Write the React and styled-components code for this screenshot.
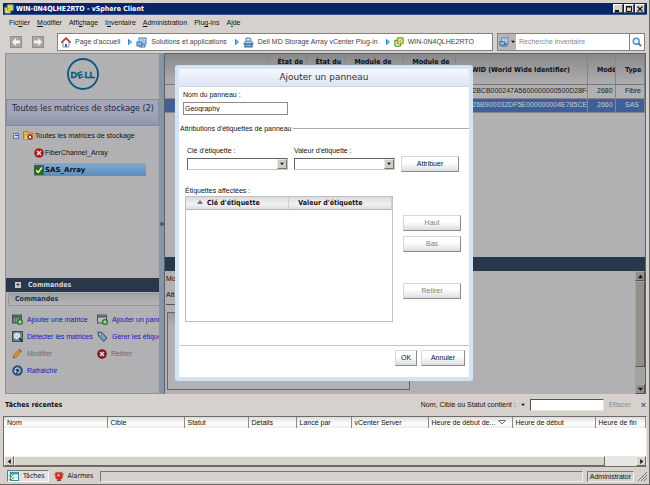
import React from 'react';
import styled, { createGlobalStyle, css } from 'styled-components';

const GlobalStyle = createGlobalStyle`
  * {
    box-sizing: border-box;
  }
  body {
    margin: 0;
    background: #d6d1cd;
    color: #111;
    font: 7px/10px 'Liberation Sans', Arial, sans-serif;
    white-space: nowrap;
  }
  button, input, select {
    margin: 0;
    padding: 0;
    border: 0;
    border-radius: 0;
    background: none;
    color: inherit;
    font: inherit;
  }
  a {
    color: inherit;
    text-decoration: none;
  }
  svg {
    display: block;
    flex: none;
  }
`;

const wide = css`
  font-family: 'DejaVu Sans', Verdana, sans-serif;
`;

const condensed = css`
  font-family: 'DejaVu Sans Condensed', 'DejaVu Sans', Tahoma, sans-serif;
`;

const dots = css`
  background-color: #b2b2b5;
  background-image: radial-gradient(#afafb2 1px, transparent 1px);
  background-size: 4px 4px;
`;

/* icons */

const ServerIcon = ({ size = 10 }) => (
  <svg width={size} height={size} viewBox="0 0 12 12">
    <rect x="1" y="4" width="7" height="7" rx="1" fill="#f3f7e0" stroke="#5f9a2c" strokeWidth="1.5" />
    <rect x="4" y="1" width="7" height="7" rx="1" fill="#d9e8a8" stroke="#6fa533" strokeWidth="1.5" />
    <rect x="5" y="5" width="3" height="3" fill="#fff" stroke="#e0952b" />
    <path d="M3 8l2-2M7 5l2-2" stroke="#e0952b" />
  </svg>
);

const HomeIcon = () => (
  <svg width="10" height="11" viewBox="0 0 10 11">
    <path d="M2 5v5h6V5L5 2z" fill="#f2f4f8" stroke="#8a9ab2" />
    <path d="M0 6l5-5 5 5" fill="none" stroke="#c8402f" strokeWidth="1.6" />
    <path d="M4 7h2v3H4z" fill="#3d6ea8" />
  </svg>
);

const SolutionsIcon = ({ size = 11 }) => (
  <svg width={size} height={size} viewBox="0 0 11 11">
    <rect x="3" y="1" width="7" height="6" fill="#cfe3f6" stroke="#4778b4" />
    <path d="M5 3h3v3" fill="none" stroke="#7fa9d8" />
    <rect x="1" y="5" width="5" height="4" fill="#8ebbe8" stroke="#3c6ca9" />
    <path d="M6 8h3v2H3" fill="none" stroke="#3c6ca9" />
  </svg>
);

const PluginIcon = () => (
  <svg width="11" height="11" viewBox="0 0 11 11">
    <path d="M3 5V1h4l1 1v3" fill="#dbe9f5" stroke="#507eae" />
    <ellipse cx="5.5" cy="6.5" rx="5" ry="3" fill="#5d8cc0" />
    <path d="M2.5 7h6l1 3h-8z" fill="#83abd6" stroke="#3c6799" />
    <path d="M2.5 5.5h6" stroke="#cfe2f5" />
  </svg>
);

const CrumbArrow = () => (
  <svg width="4" height="6" viewBox="0 0 4 6">
    <path d="M.5.5L3.5 3 .5 5.5z" fill="#9bd1f7" stroke="#2383c9" />
  </svg>
);

const SearchIcon = () => (
  <svg width="10" height="10" viewBox="0 0 10 10">
    <circle cx="4.2" cy="4.2" r="3" fill="#e3f2fc" stroke="#4f90c8" strokeWidth="1.4" />
    <path d="M6.3 6.3L9.2 9.2" stroke="#54718f" strokeWidth="1.8" />
  </svg>
);

const NavArrow = ({ back }) => (
  <svg width="8" height="8" viewBox="0 0 8 8">
    <path d={back ? 'M0 4l4-4v2.5h4v3H4V8z' : 'M8 4L4 0v2.5H0v3h4V8z'} fill="#f4f4f4" />
  </svg>
);

const Triangle = ({ dir = 'down', fill = '#111', size = 5 }) => {
  const paths = {
    down: 'M0 1h6L3 4.5z',
    up: 'M0 5h6L3 1z',
    left: 'M4.5 0v6L1 3z',
    right: 'M1.5 0v6L5 3z',
  };
  return (
    <svg width={size} height={size} viewBox="0 0 6 6">
      <path d={paths[dir]} fill={fill} />
    </svg>
  );
};

const DellLogo = () => (
  <svg width="32" height="32" viewBox="0 0 32 32" role="img" aria-label="Dell">
    <circle cx="16" cy="16" r="15" fill="none" stroke="#0b567f" strokeWidth="1.8" />
    <text
      x="3.5 11.5 17.5 22.5"
      y="19.5 21 19.5 19.5"
      rotate="0 -20 0 0"
      fill="#0b567f"
      stroke="#0b567f"
      strokeWidth=".3"
      fontFamily="Liberation Sans, Arial, sans-serif"
      fontWeight="bold"
      fontSize="9"
    >
      DELL
    </text>
  </svg>
);

const FolderIcon = () => (
  <svg width="11" height="11" viewBox="0 0 11 11">
    <path d="M.5 9.5v-8h4l1 1.5h4v6.5z" fill="#dfba4c" stroke="#a5812b" />
    <path d="M.5 9.5l2-5h8l-1 5z" fill="#ecd27b" stroke="#a5812b" strokeWidth=".6" />
    <circle cx="7" cy="7" r="2.8" fill="#b52d2d" />
    <path d="M5.9 5.9l2.2 2.2m0-2.2L5.9 8.1" stroke="#fff" />
  </svg>
);

const ErrorIcon = ({ fill = '#a71d22' }) => (
  <svg width="10" height="10" viewBox="0 0 10 10">
    <circle cx="5" cy="5" r="4.8" fill={fill} />
    <path d="M3 3l4 4m0-4L3 7" stroke="#e8e0e0" strokeWidth="1.5" />
  </svg>
);

const CheckIcon = () => (
  <svg width="10" height="10" viewBox="0 0 10 10">
    <rect width="10" height="10" rx="1" fill="#2c6b25" />
    <path d="M2.2 5.2l2 2.2 3.8-5" fill="none" stroke="#f0f5ee" strokeWidth="1.4" />
  </svg>
);

const ArrayIcon = ({ panel }) => (
  <svg width="11" height="11" viewBox="0 0 11 11">
    <rect x=".5" y="1" width="9" height="8" fill={panel ? '#b9bcbd' : '#56765f'} stroke="#4b5358" />
    <path d="M1 2.5h8" stroke="#52606a" strokeWidth="2" />
    {!panel && <path d="M2 5h6M2 7h6" stroke="#b7c7b8" strokeDasharray="1 1" />}
    <circle cx="8" cy="8" r="3" fill="#23772b" />
    <path d="M8 6v4M6 8h4" stroke="#c8e6c4" />
  </svg>
);

const DetectIcon = () => (
  <svg width="11" height="11" viewBox="0 0 11 11">
    <rect x=".5" y=".5" width="10" height="10" fill="#6c8590" stroke="#34505f" />
    <circle cx="5" cy="5" r="2.8" fill="#c3dae4" stroke="#e6eef2" />
    <path d="M7 7l3 3" stroke="#15232d" strokeWidth="1.6" />
  </svg>
);

const TagIcon = () => (
  <svg width="11" height="11" viewBox="0 0 11 11">
    <path d="M1 1l4 .6 5 5.4-3.2 3.5L1.5 5z" fill="#6b8fae" stroke="#34536e" />
    <circle cx="3" cy="3" r=".8" fill="#e6edf2" />
    <path d="M5 4l3 3M4 5.4l3 3" stroke="#c5d5e2" strokeWidth=".6" />
  </svg>
);

const PencilIcon = () => (
  <svg width="11" height="11" viewBox="0 0 11 11">
    <path d="M1 10l1-3.2L7.3 1.2 9.6 3.4 4.2 9z" fill="#d8912f" stroke="#8d6434" strokeWidth=".7" />
    <path d="M6.5 2l2.3 2.3 1-1.1L7.5 1z" fill="#b4574c" />
    <path d="M1 10l.5-1.5 1 1z" fill="#333" />
  </svg>
);

const RefreshIcon = () => (
  <svg width="11" height="11" viewBox="0 0 11 11">
    <circle cx="5.5" cy="5.5" r="5.2" fill="#294c78" />
    <path d="M3.2 6.8a2.6 2.6 0 1 1 2.3 1.3" fill="none" stroke="#c9d6e4" strokeWidth="1.2" />
    <path d="M2 6h3L3.5 8.4z" fill="#c9d6e4" />
  </svg>
);

const TasksIcon = () => (
  <svg width="10" height="9" viewBox="0 0 10 9">
    <rect x="1.5" y=".5" width="8" height="8" fill="#fff" stroke="#3a86a8" />
    <path d="M2 1.5h7" stroke="#3fa0cf" strokeWidth="2" />
    <path d="M4.5 3v5M7 3v5M2 5.5h7" stroke="#a9cbd8" strokeWidth=".6" />
    <path d="M.5 3.5l1.5 1.5L4.5 2M.5 7l1.5 1.5L4.5 5.5" fill="none" stroke="#2c9a3b" />
  </svg>
);

const AlarmIcon = () => (
  <svg width="10" height="10" viewBox="0 0 10 10">
    <path d="M.5 4l2.5-3M9.5 4L7 1" stroke="#9a6a24" strokeWidth="1.2" />
    <circle cx="5" cy="5" r="3.8" fill="#d3281e" />
    <circle cx="4.4" cy="4.2" r="1.3" fill="#f5a093" />
    <path d="M3 9.2h4" stroke="#6d3323" strokeWidth="1.4" />
  </svg>
);

const Grip = () => (
  <svg width="9" height="9" viewBox="0 0 9 9">
    <path d="M0 9l9-9M3 9l6-6M6 9l3-3" stroke="#77736c" />
  </svg>
);

/* window frame */

const Window = styled.div`
  display: flex;
  flex-direction: column;
  min-height: 100vh;
  padding: 3px 2px 0 3px;
  border-bottom: 1px solid #6a6763;
  border-right: 1px solid #6a6763;
  background: #d6d1cd;
`;

const TitleBar = styled.header`
  display: flex;
  align-items: center;
  gap: 2px;
  height: 12px;
  padding: 0 2px 0 1px;
  background: #0a246a;
  color: #fff;
  border-bottom: 1px solid #3a5590;
`;

const WindowTitle = styled.h1`
  ${condensed}
  flex: 1;
  margin: 0;
  font-size: 7px;
  line-height: 10px;
`;

const CaptionButtons = styled.div`
  display: flex;
  gap: 1px;
`;

const CaptionButton = styled.button`
  display: grid;
  place-items: center;
  width: 10px;
  height: 9px;
  background: #d6d1cd;
  border: 1px solid;
  border-color: #fff #55524e #55524e #fff;
  color: #111;
`;

const MenuBar = styled.nav`
  display: flex;
  gap: 7px;
  padding: 3px 6px 4px;
  line-height: 10px;
`;

const Toolbar = styled.div`
  display: flex;
  align-items: center;
  gap: 4px;
  height: 21px;
  padding: 1px 2px 2px 7px;
`;

const NavButtons = styled.div`
  display: flex;
  gap: 10px;
  padding-right: 9px;
`;

const NavButton = styled.button`
  display: grid;
  place-items: center;
  width: 12px;
  height: 12px;
  background: #aaa8a5;
  border: 1px solid #918f8c;
`;

const Breadcrumb = styled.nav`
  display: flex;
  flex: 1;
  align-items: center;
  height: 18px;
  padding: 0 3px;
  background: #fff;
  border: 1px solid #85827e;
  color: #444;
`;

const Crumb = styled.a`
  display: flex;
  align-items: center;
  gap: 4px;
`;

const CrumbSeparator = styled.span`
  padding: 0 4px 0 8px;
`;

const SearchBox = styled.form`
  display: flex;
  width: 148px;
  height: 18px;
  background: #fff;
  border: 1px solid #85827e;
`;

const SearchScope = styled.button`
  display: flex;
  align-items: center;
  justify-content: center;
  gap: 2px;
  width: 18px;
  background: #b9b6b3;
`;

const SearchInput = styled.input`
  flex: 1;
  min-width: 0;
  padding-left: 3px;
  color: #777;
  &::placeholder {
    color: #888;
    opacity: 1;
  }
`;

const SearchButton = styled.button`
  display: grid;
  place-items: center;
  width: 15px;
  border-left: 1px solid #85827e;
`;

/* main area */

const Main = styled.main`
  position: relative;
  display: flex;
  flex: 1;
  margin: 0 1px 0 2px;
`;

const Sidebar = styled.aside`
  display: flex;
  flex-direction: column;
  width: 154px;
  overflow: hidden;
  border: 1px solid #8d9096;
  border-right: 0;
  ${dots}
`;

const LogoArea = styled.div`
  display: grid;
  place-items: center;
  height: 45px;
  padding-bottom: 5px;
`;

const SidebarTitle = styled.h2`
  ${wide}
  margin: 0;
  height: 27px;
  padding: 2px 5px;
  border: 1px solid #868a9c;
  background: linear-gradient(#a5a8b8, #9ea3b6 60%, #8e95ac);
  color: #252b38;
  font-size: 8px;
  font-weight: normal;
  line-height: 13px;
`;

const Tree = styled.ul`
  flex: 1;
  margin: 0;
  padding: 1px 7px;
  list-style: none;
`;

const TreeRow = styled.li`
  display: flex;
  align-items: center;
  gap: 1px;
  height: 17px;
  padding-left: ${({ $level }) => $level * 21}px;
`;

const TreeToggle = styled.button`
  display: grid;
  place-items: center;
  width: 6px;
  height: 6px;
  margin-right: 3px;
  border: 1px solid #5c78b0;
  background: #cfd5e2;
  &::after {
    content: '';
    width: 3px;
    height: 1px;
    background: #2d4b8c;
  }
`;

const TreeItem = styled.a`
  display: flex;
  align-items: center;
  gap: 1px;
  flex: 1;
  height: 13px;
  margin-right: 6px;
  ${({ $selected }) =>
    $selected &&
    css`
      ${wide}
      background: linear-gradient(#7fa9d0, #5b8dbd);
      font-weight: bold;
    `}
`;

const SectionBar = styled.h3`
  ${condensed}
  display: flex;
  align-items: center;
  gap: 7px;
  margin: 0;
  height: 14px;
  padding: 0 9px;
  background: #29374b;
  color: #d3d6da;
  font-size: 7px;
`;

const CollapseBox = styled.span`
  display: grid;
  place-items: center;
  width: 6px;
  height: 6px;
  background: #c3c6ca;
`;

const CommandTitle = styled.h4`
  ${condensed}
  margin: 1px 0 0 2px;
  padding: 0 6px 1px;
  border: 1px solid #97989b;
  border-right: 0;
  background: linear-gradient(#a2a3a6, #b5b5b8);
  color: #17364f;
  font-size: 7px;
`;

const CommandGrid = styled.div`
  display: grid;
  grid-template-columns: 85px 1fr;
  grid-auto-rows: 17px;
  padding: 5px 0 14px 6px;
`;

const Command = styled.button`
  display: flex;
  align-items: center;
  gap: 4px;
  min-width: 0;
  color: #1515b8;
  &:disabled {
    color: #6b6b6e;
  }
`;

const Splitter = styled.div`
  display: grid;
  place-items: center;
  width: 5px;
  background: #8495a5;
  &::after {
    content: '';
    width: 4px;
    height: 4px;
    border-radius: 50%;
    background: #4e5964;
  }
`;

const Content = styled.section`
  display: flex;
  flex-direction: column;
  flex: 1;
  min-width: 0;
  border: 1px solid #5d6066;
  border-width: 1px 1px 0;
  ${dots}
`;

const ArrayTable = styled.table`
  width: 100%;
  border-collapse: collapse;
  table-layout: fixed;
`;

const ArrayHead = styled.th`
  ${condensed}
  height: 30px;
  padding: 3px 0 0 9px;
  overflow: hidden;
  border-right: 1px solid #85868a;
  border-bottom: 1px solid #77787c;
  background: linear-gradient(#89898c, #aeaeb1);
  font-size: 7px;
  text-align: left;
  vertical-align: ${({ $middle }) => ($middle ? 'middle' : 'top')};
`;

const ArrayRow = styled.tr`
  background: ${({ $selected }) => ($selected ? '#405f98' : 'transparent')};
  color: ${({ $selected }) => ($selected ? '#c3cbd9' : '#222')};
`;

const ArrayCell = styled.td`
  height: 14px;
  padding: 0 0 0 9px;
  overflow: hidden;
  border-right: 1px solid #85868a;
  border-bottom: 1px solid #85868a;
`;

const ContentGap = styled.div`
  flex: 1;
`;

const Detail = styled.div`
  display: flex;
  height: 123px;
`;

const DetailBody = styled.div`
  flex: 1;
  padding: 3px 1px;
`;

const DetailLine = styled.p`
  margin: 0;
  width: 244px;
  padding-bottom: 6px;
  &:nth-child(2) {
    border-bottom: 1px solid #55565a;
    padding-bottom: 4px;
  }
`;

const DetailBox = styled.div`
  width: 243px;
  height: 78px;
  margin: 7px 0 0 1px;
  border: 1px solid #67686c;
  background: linear-gradient(#9b9b9e, #b2b2b5 14px);
`;

const ScrollTrack = styled.div`
  display: flex;
  flex-direction: ${({ $horizontal }) => ($horizontal ? 'row' : 'column')};
  width: ${({ $horizontal }) => ($horizontal ? 'auto' : '10px')};
  height: ${({ $horizontal }) => ($horizontal ? '10px' : 'auto')};
  background: ${({ $horizontal }) => ($horizontal ? '#e8e6e2' : '#a3a39f')};
`;

const ScrollButton = styled.button`
  display: grid;
  place-items: center;
  width: 10px;
  height: 10px;
  background: ${({ $dim }) => ($dim ? '#91908c' : '#d6d2cc')};
  border: 1px solid;
  border-color: ${({ $dim }) => ($dim ? '#aaa9a5 #555 #555 #aaa9a5' : '#f5f4f2 #6b6863 #6b6863 #f5f4f2')};
`;

const ScrollThumb = styled.div`
  flex: ${({ $grow }) => $grow};
  background: ${({ $dim }) => ($dim ? '#91908b' : '#d6d2cc')};
  border: 1px solid;
  border-color: ${({ $dim }) => ($dim ? '#a5a4a0 #555 #555 #a5a4a0' : '#f5f4f2 #6b6863 #6b6863 #f5f4f2')};
`;

const ScrollRest = styled.div`
  flex: ${({ $grow }) => $grow};
`;

/* dialog */

const Overlay = styled.div`
  position: absolute;
  inset: 0;
  display: grid;
  place-items: center;
  padding: 0 3px 2px 0;
`;

const Dialog = styled.div`
  width: 298px;
  border: 4px solid #d5e4f4;
  border-radius: 3px;
  background: #fff;
`;

const DialogTitle = styled.h2`
  ${wide}
  margin: 0;
  height: 18px;
  background: linear-gradient(#f6f8fd, #dfe4f3);
  border-bottom: 1px solid #cdd3e2;
  color: #333;
  font-size: 9px;
  font-weight: normal;
  line-height: 17px;
  text-align: center;
`;

const Form = styled.form`
  padding: 3px 0 0 1px;
`;

const NameField = styled.div`
  display: flex;
  flex-direction: column;
  gap: 2px;
  width: 108px;
  padding-left: 3px;
`;

const NameInput = styled.input`
  height: 13px;
  padding: 0 1px;
  border: 1px solid #8a8c8e;
  background: #fff;
`;

const Legend = styled.div`
  display: flex;
  align-items: center;
  gap: 2px;
  margin: 9px 0 12px;
  &::after {
    content: '';
    flex: 1;
    height: 1px;
    background: #aaacae;
  }
`;

const AssignRow = styled.div`
  display: flex;
  align-items: flex-end;
  gap: 6px;
  padding-left: 7px;
`;

const SelectField = styled.div`
  display: grid;
  gap: 2px;
  width: 101px;
  padding-bottom: 2px;
`;

const SelectShell = styled.div`
  display: grid;
  height: 12px;
  border: 1px solid;
  border-color: #66635f #c9c7c3 #c9c7c3 #66635f;
  background: #fff;
  > * {
    grid-area: 1 / 1;
  }
`;

const Select = styled.select`
  appearance: none;
  width: 100%;
  height: 10px;
`;

const SelectArrow = styled.span`
  display: grid;
  place-items: center;
  justify-self: end;
  width: 10px;
  height: 10px;
  border: 1px solid;
  border-color: #ece9e4 #77746f #77746f #ece9e4;
  background: #d0cdc7;
  pointer-events: none;
`;

const Button = styled.button`
  width: ${({ $width }) => $width || 58}px;
  height: 16px;
  border: 1px solid;
  border-color: #d8d8da #8b8b8e #8b8b8e #d8d8da;
  background: linear-gradient(#fff 40%, #dddde2);
  &:disabled {
    color: #808083;
  }
`;

const TagsLabel = styled.div`
  padding-left: 5px;
  margin-top: 14px;
`;

const TagsRow = styled.div`
  display: flex;
  gap: 10px;
  padding-left: 5px;
`;

const TagsBox = styled.div`
  width: 208px;
  height: 126px;
  border: 1px solid #bfc0c2;
`;

const TagsTable = styled.table`
  width: 100%;
  border-collapse: collapse;
  table-layout: fixed;
`;

const TagsHead = styled.th`
  ${condensed}
  height: 13px;
  padding: 0 0 0 ${({ $sorted }) => ($sorted ? 11 : 9)}px;
  background: linear-gradient(#dcdcde, #f1f1f3 60%, #dededf);
  border-right: 1px solid #cfcfd1;
  border-bottom: 1px solid #b8b9bb;
  font-size: 7px;
  line-height: 10px;
  text-align: left;
  svg {
    display: inline-block;
    margin-right: 4px;
  }
`;

const TagActions = styled.div`
  display: flex;
  flex-direction: column;
  gap: 5px;
  padding-top: 19px;
  button:last-child {
    margin-top: 26px;
  }
`;

const DialogFooter = styled.footer`
  display: flex;
  justify-content: flex-end;
  gap: 4px;
  margin-top: 23px;
  padding: 4px 4px 11px 0;
  border-top: 1px solid #c3c4c6;
`;

/* recent tasks */

const TasksBar = styled.div`
  display: flex;
  align-items: center;
  gap: 5px;
  height: 22px;
  padding: 0 1px 0 2px;
`;

const TasksTitle = styled.h3`
  ${condensed}
  flex: 1;
  margin: 0;
  font-size: 7px;
`;

const FilterInput = styled.input`
  width: 74px;
  height: 12px;
  border: 1px solid;
  border-color: #55524e #e6e3df #e6e3df #55524e;
  background: #fff;
`;

const ClearButton = styled.button`
  color: #8e8b87;
  margin-right: 5px;
`;

const CloseButton = styled.button`
  color: #4a5f9c;
  font-size: 9px;
  font-weight: bold;
`;

const TasksBox = styled.div`
  display: flex;
  flex-direction: column;
  height: 51px;
  border: 1px solid;
  border-color: #6f6c68 #e6e3df #6f6c68 #6f6c68;
  background: #fff;
`;

const TasksTable = styled.table`
  width: 100%;
  border-collapse: collapse;
  table-layout: fixed;
`;

const TasksHead = styled.th`
  height: 11px;
  padding: 0 3px;
  overflow: hidden;
  background: linear-gradient(#dedcda, #fff 60%, #ecebea);
  border-right: 1px solid #8d8a86;
  font-weight: normal;
  text-align: left;
  svg {
    display: inline-block;
    margin-left: 3px;
  }
`;

const StatusBar = styled.footer`
  display: flex;
  align-items: center;
  gap: 4px;
  height: 17px;
  padding: 1px 0 0 4px;
`;

const StatusTab = styled.button`
  ${condensed}
  display: flex;
  align-items: center;
  gap: 4px;
  height: 12px;
  padding: 0 3px 0 1px;
  ${({ $active }) =>
    $active &&
    css`
      border: 1px solid;
      border-color: #7b7874 #fff #fff #7b7874;
      background: #e4e1de;
    `}
`;

const StatusField = styled.div`
  flex: ${({ $grow }) => ($grow ? 1 : 'none')};
  height: 11px;
  padding: 0 2px;
  border: 1px solid;
  border-color: #7b7874 #f1efec #f1efec #7b7874;
  line-height: 9px;
`;

const menus = [
  ['Fic', 'h', 'ier'],
  ['', 'M', 'odifier'],
  ['Affi', 'c', 'hage'],
  ['I', 'n', 'ventaire'],
  ['', 'A', 'dministration'],
  ['Plu', 'g', '-ins'],
  ['A', 'i', 'de'],
];

const crumbs = [
  { label: "Page d'accueil", Icon: HomeIcon },
  { label: 'Solutions et applications', Icon: SolutionsIcon },
  { label: 'Dell MD Storage Array vCenter Plug-in', Icon: PluginIcon },
  { label: 'WIN-0N4QLHE2RTO', Icon: ServerIcon },
];

const commands = [
  { label: 'Ajouter une matrice', icon: <ArrayIcon /> },
  { label: 'Ajouter un panneau', icon: <ArrayIcon panel /> },
  { label: 'Détecter les matrices', icon: <DetectIcon /> },
  { label: 'Gérer les étiquettes', icon: <TagIcon /> },
  { label: 'Modifier', icon: <PencilIcon />, disabled: true },
  { label: 'Retirer', icon: <ErrorIcon fill="#7d1a20" />, disabled: true },
  { label: 'Rafraîchir', icon: <RefreshIcon /> },
];

const arrayColumns = [
  { label: '', width: 103 },
  { label: 'État de', width: 38 },
  { label: 'État du', width: 39 },
  { label: 'Module de', width: 58 },
  { label: 'Module de', width: 52 },
  { label: 'WWID (World Wide Identifier)', middle: true },
  { label: 'Modèle', width: 28, middle: true },
  { label: 'Type', width: 29, middle: true },
];

const arrays = [
  { id: 'fc', wwid: '602BCB000247A5600000000500D28F4', model: '2680', type: 'Fibre' },
  { id: 'sas', wwid: '6026B900032DF5E000000004E785CED', model: '2660', type: 'SAS', selected: true },
];

const taskColumns = [
  { label: 'Nom', width: 103 },
  { label: 'Cible', width: 77 },
  { label: 'Statut', width: 64 },
  { label: 'Détails', width: 48 },
  { label: 'Lancé par', width: 55 },
  { label: 'vCenter Server', width: 77 },
  { label: 'Heure de début de...', width: 84, sorted: true },
  { label: 'Heure de début', width: 83 },
  { label: 'Heure de fin' },
];

function TopBars() {
  return (
    <>
      <TitleBar>
        <ServerIcon />
        <WindowTitle>WIN-0N4QLHE2RTO - vSphere Client</WindowTitle>
        <CaptionButtons>
          <CaptionButton aria-label="Réduire">
            <svg width="6" height="6"><path d="M0 5h4" stroke="#111" strokeWidth="2" /></svg>
          </CaptionButton>
          <CaptionButton aria-label="Agrandir">
            <svg width="6" height="6"><path d="M.5.5h5v5h-5zM0 1h6" fill="none" stroke="#111" /></svg>
          </CaptionButton>
          <CaptionButton aria-label="Fermer">
            <svg width="6" height="6"><path d="M.5.5l5 5m0-5l-5 5" stroke="#111" strokeWidth="1.2" /></svg>
          </CaptionButton>
        </CaptionButtons>
      </TitleBar>
      <MenuBar>
        {menus.map(([before, key, after]) => (
          <button key={before + key}>
            {before}
            <u>{key}</u>
            {after}
          </button>
        ))}
      </MenuBar>
      <Toolbar>
        <NavButtons>
          <NavButton aria-label="Précédent"><NavArrow back /></NavButton>
          <NavButton aria-label="Suivant"><NavArrow /></NavButton>
        </NavButtons>
        <Breadcrumb>
          {crumbs.map(({ label, Icon }, i) => (
            <React.Fragment key={label}>
              {i > 0 && <CrumbSeparator><CrumbArrow /></CrumbSeparator>}
              <Crumb href="#">
                <Icon />
                {label}
              </Crumb>
            </React.Fragment>
          ))}
        </Breadcrumb>
        <SearchBox>
          <SearchScope type="button" aria-label="Étendue">
            <SolutionsIcon size={10} />
            <Triangle size={4} />
          </SearchScope>
          <SearchInput aria-label="Recherche inventaire" placeholder="Recherche inventaire" />
          <SearchButton aria-label="Rechercher"><SearchIcon /></SearchButton>
        </SearchBox>
      </Toolbar>
    </>
  );
}

function SidePanel() {
  return (
    <Sidebar>
      <LogoArea><DellLogo /></LogoArea>
      <SidebarTitle>Toutes les matrices de stockage (2)</SidebarTitle>
      <Tree>
        <TreeRow $level={0}>
          <TreeToggle aria-label="Réduire" />
          <TreeItem href="#"><FolderIcon />Toutes les matrices de stockage</TreeItem>
        </TreeRow>
        <TreeRow $level={1}>
          <TreeItem href="#"><ErrorIcon />FiberChannel_Array</TreeItem>
        </TreeRow>
        <TreeRow $level={1}>
          <TreeItem href="#" $selected><CheckIcon />SAS_Array</TreeItem>
        </TreeRow>
      </Tree>
      <SectionBar>
        <CollapseBox><Triangle size={4} fill="#29374b" /></CollapseBox>
        Commandes
      </SectionBar>
      <CommandTitle>Commandes</CommandTitle>
      <CommandGrid>
        {commands.map(({ label, icon, disabled }) => (
          <Command key={label} disabled={disabled}>
            {icon}
            {label}
          </Command>
        ))}
      </CommandGrid>
    </Sidebar>
  );
}

function ArrayPanel() {
  return (
    <Content>
      <ArrayTable>
        <colgroup>
          {arrayColumns.map(({ width }, i) => (
            <col key={i} width={width} />
          ))}
        </colgroup>
        <thead>
          <tr>
            {arrayColumns.map(({ label, middle }, i) => (
              <ArrayHead key={i} $middle={middle}>{label}</ArrayHead>
            ))}
          </tr>
        </thead>
        <tbody>
          {arrays.map(({ id, wwid, model, type, selected }) => (
            <ArrayRow key={id} $selected={selected}>
              <ArrayCell colSpan={5} />
              <ArrayCell>{wwid}</ArrayCell>
              <ArrayCell>{model}</ArrayCell>
              <ArrayCell>{type}</ArrayCell>
            </ArrayRow>
          ))}
        </tbody>
      </ArrayTable>
      <ContentGap />
      <SectionBar />
      <Detail>
        <DetailBody>
          <DetailLine>Modèle :</DetailLine>
          <DetailLine>Attributions :</DetailLine>
          <DetailBox />
        </DetailBody>
        <ScrollTrack>
          <ScrollButton $dim aria-label="Monter"><Triangle dir="up" /></ScrollButton>
          <ScrollThumb $dim $grow={5} />
          <ScrollRest $grow={1} />
          <ScrollButton $dim aria-label="Descendre"><Triangle /></ScrollButton>
        </ScrollTrack>
      </Detail>
    </Content>
  );
}

function TagSelect({ id, label }) {
  return (
    <SelectField>
      <label htmlFor={id}>{label}</label>
      <SelectShell>
        <Select id={id} />
        <SelectArrow><Triangle size={4} /></SelectArrow>
      </SelectShell>
    </SelectField>
  );
}

function AddPanelDialog() {
  return (
    <Overlay>
      <Dialog role="dialog" aria-labelledby="dialog-title">
        <DialogTitle id="dialog-title">Ajouter un panneau</DialogTitle>
        <Form>
          <NameField>
            <label htmlFor="panel-name">Nom du panneau :</label>
            <NameInput id="panel-name" defaultValue="Geography" />
          </NameField>
          <Legend>Attributions d'étiquettes de panneau</Legend>
          <AssignRow>
            <TagSelect id="tag-key" label="Clé d'étiquette :" />
            <TagSelect id="tag-value" label="Valeur d'étiquette :" />
            <Button type="button">Attribuer</Button>
          </AssignRow>
          <TagsLabel>Étiquettes affectées :</TagsLabel>
          <TagsRow>
            <TagsBox>
              <TagsTable>
                <thead>
                  <tr>
                    <TagsHead $sorted><Triangle dir="up" fill="#70757f" size={6} />Clé d'étiquette</TagsHead>
                    <TagsHead>Valeur d'étiquette</TagsHead>
                  </tr>
                </thead>
              </TagsTable>
            </TagsBox>
            <TagActions>
              <Button type="button" disabled>Haut</Button>
              <Button type="button" disabled>Bas</Button>
              <Button type="button" disabled>Retirer</Button>
            </TagActions>
          </TagsRow>
          <DialogFooter>
            <Button type="button" $width={22}>OK</Button>
            <Button type="button" $width={44}>Annuler</Button>
          </DialogFooter>
        </Form>
      </Dialog>
    </Overlay>
  );
}

function RecentTasks() {
  return (
    <section>
      <TasksBar>
        <TasksTitle>Tâches récentes</TasksTitle>
        <label htmlFor="task-filter">Nom, Cible ou Statut contient :</label>
        <Triangle size={4} />
        <FilterInput id="task-filter" />
        <ClearButton disabled>Effacer</ClearButton>
        <CloseButton aria-label="Fermer">×</CloseButton>
      </TasksBar>
      <TasksBox>
        <TasksTable>
          <colgroup>
            {taskColumns.map(({ label, width }) => (
              <col key={label} width={width} />
            ))}
          </colgroup>
          <thead>
            <tr>
              {taskColumns.map(({ label, sorted }) => (
                <TasksHead key={label}>
                  {label}
                  {sorted && (
                    <svg width="8" height="5"><path d="M.5.5h7L4 4z" fill="none" stroke="#77746f" /></svg>
                  )}
                </TasksHead>
              ))}
            </tr>
          </thead>
        </TasksTable>
        <ContentGap />
        <ScrollTrack $horizontal>
          <ScrollButton aria-label="Gauche"><Triangle dir="left" /></ScrollButton>
          <ScrollThumb $grow={19} />
          <ScrollRest $grow={1} />
          <ScrollButton aria-label="Droite"><Triangle dir="right" /></ScrollButton>
        </ScrollTrack>
      </TasksBox>
    </section>
  );
}

function App() {
  return (
    <>
      <GlobalStyle />
      <Window>
        <TopBars />
        <Main>
          <SidePanel />
          <Splitter />
          <ArrayPanel />
          <AddPanelDialog />
        </Main>
        <RecentTasks />
        <StatusBar>
          <StatusTab $active><TasksIcon />Tâches</StatusTab>
          <StatusTab><AlarmIcon />Alarmes</StatusTab>
          <StatusField $grow />
          <StatusField>Administrator</StatusField>
          <Grip />
        </StatusBar>
      </Window>
    </>
  );
}

export default App;
